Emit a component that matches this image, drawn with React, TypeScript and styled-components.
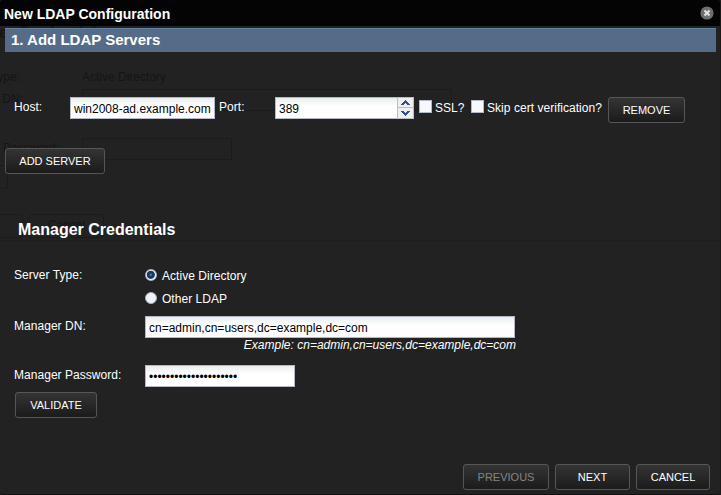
import React from 'react';
import styled, { createGlobalStyle } from 'styled-components';

const Global = createGlobalStyle`
  * { box-sizing: border-box; }
  html, body { margin: 0; padding: 0; overflow: hidden; background: #222; }
  body, input, button { font-family: "Liberation Sans", Arial, sans-serif; font-size: 12px; color: #fff; }
  input, button { margin: 0; }
`;

const Dialog = styled.main`
  position: relative;
  display: flex;
  flex-direction: column;
  width: 721px;
  height: 495px;
  background: #222;
  border-right: 1px solid #191919;
  border-bottom: 1px solid #111;
  border-radius: 3px;
  overflow: hidden;
`;

const TitleBar = styled.header`
  position: relative;
  display: flex;
  align-items: center;
  justify-content: space-between;
  height: 26px;
  padding: 1px 6px 0 4px;
  background: #040404;
`;

const Title = styled.h1`
  margin: 0;
  font-size: 14px;
  line-height: 16px;
`;

const CloseButton = styled.button`
  width: 14px;
  height: 14px;
  padding: 0;
  border: 0;
  margin-top: -1px;
  background: none;
  svg { display: block; }
`;

const Body = styled.form`
  position: relative;
  flex: 1;
  display: flex;
  flex-direction: column;
  padding: 2px 10px 4px 5px;
`;

const SectionBar = styled.h2`
  width: 711px;
  height: 24px;
  margin: 0 0 45px;
  padding-left: 6px;
  border-top: 1px solid #6482a4;
  background: #556c88;
  font-size: 15px;
  line-height: 22px;
`;

const SectionTitle = styled.h2`
  height: 20px;
  margin: 46px 0 24px 13px;
  font-size: 16px;
  line-height: 20px;
`;

const FormRow = styled.div<{ $h: number }>`
  display: flex;
  align-items: flex-start;
  height: ${p => p.$h}px;
  padding-left: 9px;
`;

const Text = styled.span<{ $w?: number; $top?: number; $inset?: number }>`
  flex: none;
  width: ${p => (p.$w ? `${p.$w}px` : 'auto')};
  margin-top: ${p => p.$top ?? 0}px;
  padding-left: ${p => p.$inset ?? 0}px;
  line-height: 20px;
  letter-spacing: 0.04px;
  white-space: nowrap;
`;

const Field = styled.input<{ $w: number; $joined?: boolean }>`
  width: ${p => p.$w}px;
  height: 22px;
  padding: 1px 3px 0;
  border: 1px solid #b5b8c8;
  border-right-width: ${p => (p.$joined ? 0 : 1)}px;
  border-radius: 0;
  outline: 0;
  background: linear-gradient(#e9eeee, #fff 8px);
  color: #000;
`;

const Spinner = styled.span`
  width: 17px;
  height: 22px;
  margin-right: 5px;
  svg { display: block; }
`;

const Check = styled.input.attrs({ type: 'checkbox' })`
  appearance: none;
  flex: none;
  width: 13px;
  height: 13px;
  margin: 3px 3px 0 0;
  border: 1px solid #aeb9c9;
  background: #f6f8fb;
`;

const Button = styled.button<{ $w: number }>`
  flex: none;
  width: ${p => p.$w}px;
  height: 26px;
  padding: 0 0 1px;
  border: 1px solid #565656;
  border-radius: 3px;
  background: linear-gradient(#343434, #1b1b1b);
  color: #fff;
  font-size: 11px;
  line-height: 14px;
  white-space: nowrap;
  &:disabled { color: #858585; }
`;

const Options = styled.div`
  display: flex;
  flex-direction: column;
  gap: 3px;
  padding-top: 1px;
`;

const Option = styled.label`
  display: flex;
  align-items: center;
  height: 20px;
`;

const Radio = styled.input.attrs({ type: 'radio' })`
  appearance: none;
  width: 12px;
  height: 12px;
  margin: 0 5px 0 0;
  border: 1px solid #a4b3c8;
  border-radius: 50%;
  background: #f0f2f6;
  &:checked {
    background: radial-gradient(circle at 48% 48%, #4c73a5 0 0.6px, #183864 1.8px 3.6px, #f4f7fb 4.5px);
  }
`;

const FieldStack = styled.div`
  display: flex;
  flex-direction: column;
  width: 371px;
`;

const Hint = styled.em`
  align-self: flex-end;
  line-height: 14px;
  white-space: nowrap;
`;

const Actions = styled.div`
  display: flex;
  padding-left: 10px;
`;

const Footer = styled.footer`
  display: flex;
  justify-content: flex-end;
  gap: 6px;
  margin-top: auto;
`;

const Backdrop = styled.svg`
  position: absolute;
  inset: 0;
  pointer-events: none;
`;

function UnderlyingPage() {
  return (
    <Backdrop width="721" height="495" aria-hidden="true">
      <g fill="#151515" fontSize="12">
        <text x="-52" y="38" fontSize="16" fontWeight="bold">Manager Credentials</text>
        <text x="20" y="81" textAnchor="end">Type:</text>
        <text x="82" y="81">Active Directory</text>
        <text x="23" y="103" textAnchor="end">DN:</text>
        <text x="3" y="152">Password:</text>
        <text x="48" y="229">Cancel</text>
      </g>
      <g fill="none" stroke="#1b1b1b">
        <rect x="82.5" y="89.5" width="369" height="21" />
        <rect x="82.5" y="138.5" width="149" height="21" />
        <rect x="-20.5" y="165.5" width="28" height="23" rx="3" />
        <rect x="-20.5" y="214.5" width="43" height="23" rx="3" />
        <rect x="29.5" y="214.5" width="74" height="23" rx="3" />
        <path d="M0 240.5H721" stroke="#1e1e1e" />
      </g>
    </Backdrop>
  );
}

function CloseIcon() {
  return (
    <svg width="14" height="14" viewBox="0 0 14 14">
      <circle cx="7" cy="7" r="6.6" fill="#6e6e6e" />
      <path d="M4.5 4.5l5 5M9.5 4.5l-5 5" stroke="#e4e4e4" strokeWidth="2.1" />
    </svg>
  );
}

function SpinnerArrows() {
  return (
    <svg width="17" height="22" viewBox="0 0 17 22" shapeRendering="crispEdges">
      <path fill="#f0eff0" d="M0 0h17v22H0z" />
      <path d="M.5.5h16v21H.5zM0 10.5h17" fill="none" stroke="#b9bccb" />
      <path fill="#31508d" d="M8 3h1v1h1v1h1v1h1v1h1v1h-3V7H9V6H8v1H7v1H4V7h1V6h1V5h1V4h1zM4 14h3v1h1v1h1v-1h1v-1h3v1h-1v1h-1v1h-1v1H9v1H8v-1H7v-1H6v-1H5v-1H4z" />
    </svg>
  );
}

export default function App() {
  return (
    <>
      <Global />
      <Dialog>
        <UnderlyingPage />
        <TitleBar>
          <Title>New LDAP Configuration</Title>
          <CloseButton aria-label="Close"><CloseIcon /></CloseButton>
        </TitleBar>
        <Body onSubmit={e => e.preventDefault()}>
          <SectionBar>1. Add LDAP Servers</SectionBar>
          <FormRow $h={51}>
            <Text $w={56}>Host:</Text>
            <Field $w={145} defaultValue="win2008-ad.example.com" />
            <Text $w={60} $inset={4}>Port:</Text>
            <Field $w={122} $joined defaultValue="389" />
            <Spinner><SpinnerArrows /></Spinner>
            <Check />
            <Text $w={36} $top={1}>SSL?</Text>
            <Check />
            <Text $w={121} $top={1}>Skip cert verification?</Text>
            <Button type="button" $w={77}>REMOVE</Button>
          </FormRow>
          <Button type="button" $w={100}>ADD SERVER</Button>
          <SectionTitle>Manager Credentials</SectionTitle>
          <FormRow $h={52}>
            <Text $w={131} $top={1}>Server Type:</Text>
            <Options>
              <Option><Radio name="type" defaultChecked /><Text $top={2}>Active Directory</Text></Option>
              <Option><Radio name="type" /><Text $top={2}>Other LDAP</Text></Option>
            </Options>
          </FormRow>
          <FormRow $h={49}>
            <Text $w={131}>Manager DN:</Text>
            <FieldStack>
              <Field $w={370} defaultValue="cn=admin,cn=users,dc=example,dc=com" />
              <Hint>Example: cn=admin,cn=users,dc=example,dc=com</Hint>
            </FieldStack>
          </FormRow>
          <FormRow $h={27}>
            <Text $w={131}>Manager Password:</Text>
            <Field type="password" $w={150} defaultValue="examplepassword123456" />
          </FormRow>
          <Actions><Button type="button" $w={82}>VALIDATE</Button></Actions>
          <Footer>
            <Button type="button" $w={86} disabled>PREVIOUS</Button>
            <Button type="button" $w={75}>NEXT</Button>
            <Button type="button" $w={74}>CANCEL</Button>
          </Footer>
        </Body>
      </Dialog>
    </>
  );
}
